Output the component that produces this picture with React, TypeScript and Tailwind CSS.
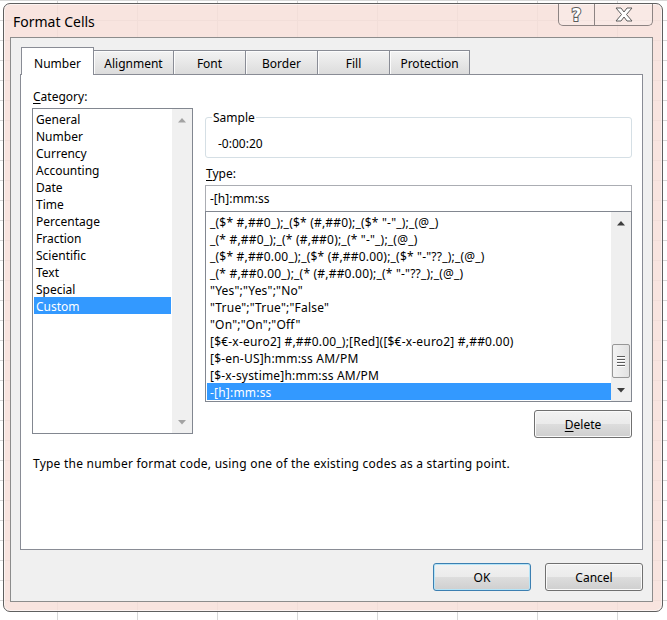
import React from "react";

const categories = [
  "General",
  "Number",
  "Currency",
  "Accounting",
  "Date",
  "Time",
  "Percentage",
  "Fraction",
  "Scientific",
  "Text",
  "Special",
  "Custom",
];

const formats = [
  '_($* #,##0_);_($* (#,##0);_($* "-"_);_(@_)',
  '_(* #,##0_);_(* (#,##0);_(* "-"_);_(@_)',
  '_($* #,##0.00_);_($* (#,##0.00);_($* "-"??_);_(@_)',
  '_(* #,##0.00_);_(* (#,##0.00);_(* "-"??_);_(@_)',
  '"Yes";"Yes";"No"',
  '"True";"True";"False"',
  '"On";"On";"Off"',
  "[$€-x-euro2] #,##0.00_);[Red]([$€-x-euro2] #,##0.00)",
  "[$-en-US]h:mm:ss AM/PM",
  "[$-x-systime]h:mm:ss AM/PM",
  "-[h]:mm:ss",
];

const tabs = [
  { label: "Alignment", w: "w-[80px]" },
  { label: "Font", w: "w-[72px]" },
  { label: "Border", w: "w-[72px]" },
  { label: "Fill", w: "w-[72px]" },
  { label: "Protection", w: "w-[80px]" },
];

const Arrow = ({ down, color }: { down?: boolean; color: string }) => (
  <svg width="8" height="5" viewBox="0 0 8 5">
    <polygon points={down ? "0,0 8,0 4,4.5" : "0,4.5 8,4.5 4,0"} fill={color} />
  </svg>
);

const Button = ({ children, primary }: { children: React.ReactNode; primary?: boolean }) => (
  <button
    className={`h-[28px] w-[98px] rounded-[3px] border bg-[linear-gradient(to_bottom,#f2f2f2_0%,#ebebeb_50%,#dddddd_51%,#cfcfcf_100%)] pt-[1px] text-[12px] leading-[16px] text-black ${
      primary
        ? "border-[#3c7fb1] shadow-[inset_0_0_0_1px_#b5e4f7]"
        : "border-[#707070] shadow-[inset_0_0_0_1px_#fafafa]"
    }`}
  >
    {children}
  </button>
);

export default function App() {
  return (
    <div className="h-[620px] w-[667px] overflow-hidden bg-white bg-[linear-gradient(to_right,#d8d8d8_1px,transparent_1px),linear-gradient(to_bottom,#d8d8d8_1px,transparent_1px)] bg-[length:80px_20px] bg-[position:57px_0] pl-[3px] pt-[3px] font-['Noto_Sans',sans-serif] text-[12px] leading-[16px] text-black">
      <div className="flex h-[609px] w-[660px] flex-col rounded-[7px] border border-[#5f5f5f] bg-[#f7dfd9]/85 shadow-[inset_0_0_0_1px_rgba(255,255,255,0.55)]">
        {/* caption */}
        <div className="flex h-[33px] shrink-0 items-start justify-between">
          <div className="pl-[9px] pt-[10px] text-[14px] leading-[16px]">Format Cells</div>
          <div className="mr-[9px] flex h-[22px] rounded-b-[5px] border border-t-0 border-[#8d8483] bg-white/20">
            <div className="flex w-[36px] items-center justify-center border-r border-[#8d8483] font-['DejaVu_Sans',sans-serif] text-[17px] font-bold text-white [-webkit-text-stroke:2px_#5c5c5c] [paint-order:stroke_fill]">
              ?
            </div>
            <div className="flex w-[57px] items-center justify-center">
              <svg width="18" height="15" viewBox="0 0 18 15">
                <polygon
                  points="1,1 6,1 9,5 12,1 17,1 11.5,7.5 17,14 12,14 9,10 6,14 1,14 6.5,7.5"
                  fill="#fff"
                  stroke="#5c5c5c"
                  strokeWidth="1"
                  strokeLinejoin="round"
                />
              </svg>
            </div>
          </div>
        </div>

        {/* client area */}
        <div className="mb-[9px] ml-[6px] mr-[9px] flex-1 border border-[#8c8c8c] bg-[#f0f0f0] pl-[9px] pt-[9px]">
          {/* tabs */}
          <div className="flex h-[27px] items-end">
            <div className="relative z-10 mb-[-1px] ml-[1px] h-[28px] w-[73px] border border-b-0 border-[#898c95] bg-white pt-[8px] text-center">
              Number
            </div>
            {tabs.map((t) => (
              <div
                key={t.label}
                className={`h-[24px] ${t.w} border border-b-0 border-l-0 border-[#898c95] bg-[linear-gradient(to_bottom,#f3f3f3,#dcdcdc)] pt-[5px] text-center shadow-[inset_1px_1px_0_#fcfcfc]`}
              >
                {t.label}
              </div>
            ))}
          </div>

          {/* tab panel */}
          <div className="flex h-[476px] w-[623px] flex-col border border-[#898c95] bg-white">
            <div className="flex pl-[11px] pt-[14px]">
              {/* category */}
              <div className="w-[161px]">
                <div className="mb-[3px] pl-[1px]">
                  <span className="underline underline-offset-2">C</span>ategory:
                </div>
                <div className="flex h-[326px] border border-[#828790]">
                  <div className="flex-1 pl-[1px] pr-[1px] pt-[1px]">
                    {categories.map((c) => (
                      <div
                        key={c}
                        className={`h-[17px] pl-[2px] pt-[1px] leading-[17px] ${c === "Custom" ? "bg-[#3399ff] text-white" : ""}`}
                      >
                        {c}
                      </div>
                    ))}
                  </div>
                  <div className="flex w-[20px] flex-col justify-between bg-[#f0f0f0]">
                    <div className="flex h-[22px] items-center justify-center">
                      <Arrow color="#a3a3a3" />
                    </div>
                    <div className="flex h-[22px] items-center justify-center">
                      <Arrow down color="#a3a3a3" />
                    </div>
                  </div>
                </div>
              </div>

              {/* type side */}
              <div className="ml-[12px] flex w-[427px] flex-col">
                <fieldset className="mt-[20px] h-[49px] rounded-[3px] border border-[#d5dfe5]">
                  <legend className="ml-[6px] px-[1px] pt-[1px] leading-[16px]">Sample</legend>
                  <div className="pl-[12px] pt-[10px]">-0:00:20</div>
                </fieldset>
                <div className="mt-[7px] pl-[1px] pt-[1px]">
                  <span className="underline underline-offset-2">T</span>ype:
                </div>
                <div className="mt-[3px] flex h-[26px] items-center border border-b-0 border-[#abadb3] pl-[4px] pt-[1px]">
                  -[h]:mm:ss
                </div>
                <div className="flex h-[191px] border border-[#828790]">
                  <div className="min-w-0 flex-1 overflow-hidden pl-[1px] pt-[1px] tracking-[0.2px]">
                    {formats.map((f, i) => (
                      <div
                        key={f}
                        className={`h-[17px] whitespace-nowrap pl-[3px] pt-[1px] leading-[17px] ${
                          i === formats.length - 1 ? "bg-[#3399ff] text-white" : ""
                        }`}
                      >
                        {f}
                      </div>
                    ))}
                  </div>
                  <div className="flex w-[20px] flex-col bg-[#efefef]">
                    <div className="flex h-[22px] items-center justify-center">
                      <Arrow color="#3d3d3d" />
                    </div>
                    <div className="flex-1" />
                    <div className="mx-[1px] flex h-[34px] flex-col items-center justify-center gap-[1px] rounded-[2px] border border-[#979797] bg-[linear-gradient(to_right,#f3f3f3,#e2e2e2)]">
                      {[0, 1, 2, 3].map((n) => (
                        <div key={n} className="h-[2px] w-[8px] border-t border-b border-t-[#5b5b5b] border-b-[#ffffff]" />
                      ))}
                    </div>
                    <div className="h-[1px]" />
                    <div className="flex h-[22px] items-center justify-center">
                      <Arrow down color="#3d3d3d" />
                    </div>
                  </div>
                </div>
                <div className="mt-[8px] self-end">
                  <Button>
                    <span className="underline underline-offset-2">D</span>elete
                  </Button>
                </div>
              </div>
            </div>
            <div className="mt-[18px] pl-[12px] tracking-[0.23px]">
              Type the number format code, using one of the existing codes as a starting point.
            </div>
          </div>

          {/* dialog buttons */}
          <div className="mt-[13px] flex w-[623px] justify-end gap-[14px]">
            <Button primary>OK</Button>
            <Button>Cancel</Button>
          </div>
        </div>
      </div>
    </div>
  );
}
